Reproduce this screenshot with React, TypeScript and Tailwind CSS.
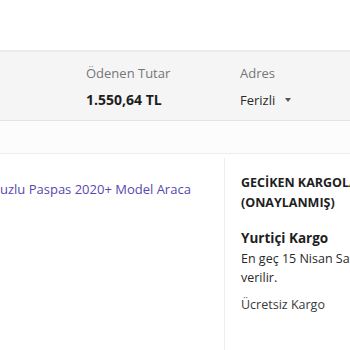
import React from "react";

export default function App() {
  return (
    <div
      className="w-[350px] h-[350px] overflow-hidden bg-white text-[#333]"
      style={{ fontFamily: '"Open Sans", "Noto Sans", sans-serif' }}
    >
      <div className="h-[50px]" />
      <div className="h-[71px] border-t-2 border-b border-t-[#ebebeb] border-b-[#e3e3e3] bg-[#f5f5f5] flex">
        <div className="ml-[86px] w-[154px] pt-[12px]">
          <div className="text-[13px] leading-[19px] text-[#767676]">Ödenen Tutar</div>
          <div className="mt-[7px] text-[14px] leading-[20px] font-bold text-[#1e1e1e] whitespace-nowrap">1.550,64 TL</div>
        </div>
        <div className="pt-[12px]">
          <div className="text-[13px] leading-[19px] text-[#767676]">Adres</div>
          <div className="mt-[7px] text-[13px] leading-[20px] text-[#2a2a2a] flex items-center whitespace-nowrap">
            Ferizli
            <svg className="ml-[10px]" width="6" height="4" viewBox="0 0 6 4">
              <path d="M0 0 L6 0 L3 4 Z" fill="#555" />
            </svg>
          </div>
        </div>
      </div>
      <div className="h-[33px] bg-[#fcfcfc] border-b border-[#ececec]" />
      <div className="flex mt-[4px]">
        <div className="w-[225px] shrink-0 border-r border-[#eeeeee] pt-[22px] h-[200px]">
          <div className="text-[13px] leading-[19px] text-[#5848b0] whitespace-nowrap">
            uzlu Paspas 2020+ Model Araca
          </div>
        </div>
        <div className="pl-[16px] pt-[15px] whitespace-nowrap">
          <div className="text-[12.5px] leading-[20px] font-bold text-[#1e1e1e]">
            GECİKEN KARGOLAR
            <br />
            (ONAYLANMIŞ)
          </div>
          <div className="mt-[15px] text-[13.5px] leading-[20px] font-bold text-[#1e1e1e]">Yurtiçi Kargo</div>
          <div className="mt-[1px] text-[12.5px] leading-[19px] text-[#2a2a2a]">
            En geç 15 Nisan Salı günü kargoya
            <br />
            verilir.
          </div>
          <div className="mt-[8px] text-[12.5px] leading-[19px] text-[#3a3a3a]">Ücretsiz Kargo</div>
        </div>
      </div>
    </div>
  );
}
